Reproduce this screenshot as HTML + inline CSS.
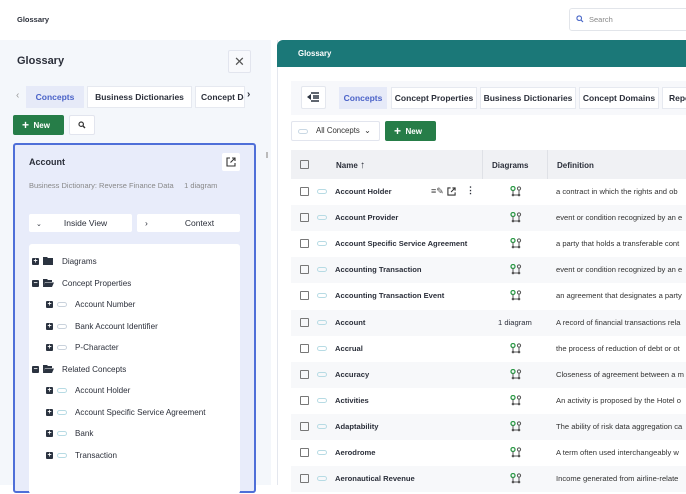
<!DOCTYPE html>
<html><head><meta charset="utf-8"><style>
*{box-sizing:border-box;margin:0;padding:0}
body{width:686px;height:485px;overflow:hidden;font-family:"Liberation Sans",sans-serif;background:#fff;position:relative;color:#2b2f3a}
.a{position:absolute}
.b{font-weight:bold}
.tab{position:absolute;height:22px;background:#fff;border:1px solid #e6e9f0;font-size:8.5px;font-weight:bold;line-height:20px;text-align:center;color:#2b2f3a;white-space:nowrap;overflow:hidden}
.row{position:absolute;left:291px;width:395px;height:26px;font-size:7.6px}
.row .cb{position:absolute;left:9px;top:8px;width:9px;height:9px;border:1px solid #777;border-radius:1px}
.row .cap{position:absolute;left:26px;top:10px;width:10px;height:5px;border:1px solid #b7dbe4;border-radius:3px}
.row .nm{position:absolute;left:44px;top:8px;font-weight:bold}
.row .df{position:absolute;left:265px;top:8px;white-space:nowrap;color:#333}
.row .dg{position:absolute;left:219px;top:7px}
.tr{position:absolute;font-size:8.1px;color:#2b2f3a}
.pl{position:absolute;width:7px;height:7px;background:#2b3340;border-radius:1px;color:#fff;font-size:7px;line-height:7px;text-align:center;font-weight:bold}
.cp{position:absolute;width:10px;height:5px;border:1px solid #b7dbe4;border-radius:3px}
</style></head><body>
<div class="a b" style="left:17px;top:15px;font-size:7.5px">Glossary</div>
<div class="a" style="left:569px;top:8px;width:130px;height:23px;border:1px solid #e2e5ea;border-radius:3px;font-size:7.5px;color:#888;padding:6px 0 0 19px">Search</div>
<svg class="a" style="left:576px;top:15px" width="8" height="8" viewBox="0 0 8 8"><circle cx="3.2" cy="3.2" r="2.3" fill="none" stroke="#4a68c8" stroke-width="1.1"/><path d="M5 5l2 2" stroke="#4a68c8" stroke-width="1.2"/></svg>

<div class="a" style="left:0;top:40px;width:271px;height:445px;background:#f4f7fb"></div>
<div class="a b" style="left:17px;top:55px;font-size:11px">Glossary</div>
<div class="a" style="left:228px;top:50px;width:23px;height:23px;border:1px solid #e2e5ee;background:#f8f9fc;border-radius:2px;text-align:center;line-height:21px;font-size:13px;color:#555">✕</div>
<div class="a" style="left:16px;top:90px;font-size:10px;color:#999">‹</div>
<div class="tab" style="left:26px;top:86px;width:58px;background:#e6eaf8;border-color:#e6eaf8;color:#4a62c8">Concepts</div>
<div class="tab" style="left:87px;top:86px;width:105px">Business Dictionaries</div>
<div class="tab" style="left:195px;top:86px;width:50px;text-align:left;padding-left:5px">Concept Do</div>
<div class="a b" style="left:247px;top:89px;font-size:10px">›</div>
<div class="a b" style="left:13px;top:115px;width:51px;height:20px;background:#267d48;border-radius:2px;color:#fff;font-size:8px;line-height:20px;padding-left:9px"><span style="font-size:12px;vertical-align:-1px">+</span>&nbsp;&nbsp;New</div>
<div class="a" style="left:69px;top:115px;width:26px;height:20px;background:#fff;border:1px solid #e2e5ee;border-radius:2px"></div>
<svg class="a" style="left:78px;top:121px" width="8" height="8" viewBox="0 0 8 8"><circle cx="3.2" cy="3.2" r="2.2" fill="none" stroke="#333" stroke-width="1.2"/><path d="M5 5l2 2" stroke="#333" stroke-width="1.4"/></svg>
<div class="a" style="left:266px;top:152px;width:2px;height:6px;background:#bbb"></div>

<div class="a" style="left:13px;top:143px;width:243px;height:350px;border:2px solid #4f6fd8;border-radius:3px;background:#e8ecfa"></div>
<div class="a b" style="left:29px;top:157px;font-size:9px">Account</div>
<div class="a" style="left:222px;top:153px;width:18px;height:18px;background:#fff;border-radius:2px"></div>
<svg class="a" style="left:226px;top:157px" width="10" height="10" viewBox="0 0 10 10"><path d="M4 1H1v8h8V6M6 1h3v3M9 1L4.5 5.5" fill="none" stroke="#333" stroke-width="1.1"/></svg>
<div class="a" style="left:29px;top:181px;font-size:7.5px;color:#888">Business Dictionary: Reverse Finance Data &nbsp;&nbsp;&nbsp; 1 diagram</div>
<div class="a" style="left:29px;top:214px;width:103px;height:18px;background:#fff;border-radius:2px;font-size:8.5px;line-height:18px"><span style="margin-left:7px;font-size:7px">⌄</span><span style="margin-left:22px">Inside View</span></div>
<div class="a" style="left:137px;top:214px;width:103px;height:18px;background:#fff;border-radius:2px;font-size:8.5px;line-height:18px"><span style="margin-left:8px">›</span><span style="margin-left:37px">Context</span></div>
<div class="a" style="left:29px;top:244px;width:211px;height:250px;background:#fff;border-radius:3px"></div>

<div class="pl" style="left:32px;top:258px">+</div>
<svg class="a" style="left:43px;top:257px" width="10" height="8"><path d="M0 0h4l1 1h5v7H0z" fill="#2b3340"/></svg>
<div class="tr" style="left:62px;top:257px">Diagrams</div>
<div class="pl" style="left:32px;top:280px">−</div>
<svg class="a" style="left:43px;top:279px" width="11" height="8"><path d="M0 0h4l1 1h4v2H2L0 8z M2 3.5h9L9 8H0z" fill="#2b3340"/></svg>
<div class="tr" style="left:62px;top:279px">Concept Properties</div>
<div class="pl" style="left:46px;top:301px">+</div><div class="cp" style="left:57px;top:302px;border-color:#c9d2dc"></div><div class="tr" style="left:75px;top:300px">Account Number</div>
<div class="pl" style="left:46px;top:323px">+</div><div class="cp" style="left:57px;top:324px;border-color:#c9d2dc"></div><div class="tr" style="left:75px;top:322px">Bank Account Identifier</div>
<div class="pl" style="left:46px;top:344px">+</div><div class="cp" style="left:57px;top:345px;border-color:#c9d2dc"></div><div class="tr" style="left:75px;top:343px">P-Character</div>
<div class="pl" style="left:32px;top:366px">−</div>
<svg class="a" style="left:43px;top:365px" width="11" height="8"><path d="M0 0h4l1 1h4v2H2L0 8z M2 3.5h9L9 8H0z" fill="#2b3340"/></svg>
<div class="tr" style="left:62px;top:365px">Related Concepts</div>
<div class="pl" style="left:46px;top:387px">+</div><div class="cp" style="left:57px;top:388px"></div><div class="tr" style="left:75px;top:386px">Account Holder</div>
<div class="pl" style="left:46px;top:409px">+</div><div class="cp" style="left:57px;top:410px"></div><div class="tr" style="left:75px;top:408px">Account Specific Service Agreement</div>
<div class="pl" style="left:46px;top:430px">+</div><div class="cp" style="left:57px;top:431px"></div><div class="tr" style="left:75px;top:429px">Bank</div>
<div class="pl" style="left:46px;top:452px">+</div><div class="cp" style="left:57px;top:453px"></div><div class="tr" style="left:75px;top:451px">Transaction</div>

<div class="a" style="left:277px;top:40px;width:409px;height:445px;background:#fff;border-left:1px solid #e4e7ee"></div>
<div class="a" style="left:277px;top:40px;width:409px;height:27px;background:#1b7878;border-radius:6px 0 0 0"></div>
<div class="a b" style="left:298px;top:49px;font-size:7.8px;color:#fff">Glossary</div>
<div class="a" style="left:291px;top:81px;width:395px;height:34px;background:#f7f8fb"></div>
<div class="a" style="left:301px;top:86px;width:25px;height:23px;background:#fff;border:1px solid #e4e7ee;border-radius:2px"></div>
<svg class="a" style="left:307px;top:92px" width="13" height="10"><path d="M4 1h8M6 4h6M6 6h6M4 9h8" stroke="#2b3340" stroke-width="1.6"/><path d="M0 5l4-3v6z" fill="#2b3340"/></svg>
<div class="tab" style="left:339px;top:87px;width:48px;background:#e6eaf8;border-color:#e6eaf8;color:#4a62c8">Concepts</div>
<div class="tab" style="left:391px;top:87px;width:86px">Concept Properties</div>
<div class="tab" style="left:480px;top:87px;width:96px">Business Dictionaries</div>
<div class="tab" style="left:579px;top:87px;width:80px">Concept Domains</div>
<div class="tab" style="left:662px;top:87px;width:40px;text-align:left;padding-left:6px">Repo</div>
<div class="a" style="left:291px;top:121px;width:89px;height:20px;border:1px solid #e2e5ee;border-radius:2px;font-size:7.8px;line-height:18px;padding-left:24px;color:#333">All Concepts &nbsp;⌄</div>
<div class="cp" style="left:298px;top:129px;border-color:#c9d8e4"></div>
<div class="a b" style="left:385px;top:121px;width:51px;height:20px;background:#267d48;border-radius:2px;color:#fff;font-size:8px;line-height:20px;padding-left:9px"><span style="font-size:12px;vertical-align:-1px">+</span>&nbsp;&nbsp;New</div>

<div class="a" style="left:291px;top:150px;width:395px;height:29px;background:#f0f1f4"></div>
<div class="a" style="left:482px;top:150px;width:1px;height:29px;background:#dfe1e6"></div>
<div class="a" style="left:547px;top:150px;width:1px;height:29px;background:#dfe1e6"></div>
<div class="a" style="left:300px;top:160px;width:9px;height:9px;border:1px solid #777;border-radius:1px"></div>
<div class="a b" style="left:336px;top:160px;font-size:8px">Name <span style="font-size:10px">↑</span></div>
<div class="a b" style="left:492px;top:161px;font-size:8px">Diagrams</div>
<div class="a b" style="left:557px;top:161px;font-size:8px">Definition</div>

<div id="rows"></div>
<script>
var d=[["Account Holder","a contract in which the rights and ob"],["Account Provider","event or condition recognized by an e"],["Account Specific Service Agreement","a party that holds a transferable cont"],["Accounting Transaction","event or condition recognized by an e"],["Accounting Transaction Event","an agreement that designates a party"],["Account","A record of financial transactions rela"],["Accrual","the process of reduction of debt or ot"],["Accuracy","Closeness of agreement between a m"],["Activities","An activity is proposed by the Hotel o"],["Adaptability","The ability of risk data aggregation ca"],["Aerodrome","A term often used interchangeably w"],["Aeronautical Revenue","Income generated from airline-relate"]];
var ic='<svg width="12" height="11" viewBox="0 0 12 11"><circle cx="3" cy="2.5" r="2" fill="none" stroke="#2e9a48" stroke-width="1.3"/><circle cx="9" cy="2.5" r="1.6" fill="none" stroke="#555" stroke-width="1"/><path d="M3 4.5v4M9 4v4M3 9h6" stroke="#555" stroke-width="1"/><circle cx="3" cy="9" r="1.3" fill="#555"/><circle cx="9" cy="9" r="1.3" fill="#555"/></svg>';
var h='';
d.forEach(function(r,i){var y=179+i*26.1;var bg=i%2?'#f7f8fa':'#fff';
h+='<div class="row" style="top:'+y+'px;background:'+bg+'"><div class="cb"></div><div class="cap"></div><div class="nm">'+r[0]+'</div>'+(i==5?'<div class="dg" style="left:207px;top:8px">1 diagram</div>':'<div class="dg">'+ic+'</div>')+'<div class="df">'+r[1]+'</div>'+(i==0?'<div style="position:absolute;left:140px;top:7px;font-size:9px;color:#444">&#x2261;&#x270E;</div><svg style="position:absolute;left:156px;top:8px" width="9" height="9" viewBox="0 0 10 10"><path d="M4 1H1v8h8V6M6 1h3v3M9 1L4.5 5.5" fill="none" stroke="#333" stroke-width="1.2"/></svg><div style="position:absolute;left:175px;top:6px;font-size:9px;font-weight:bold">⋮</div>':'')+'</div>';});
document.getElementById('rows').innerHTML=h;
</script>
</body></html>
